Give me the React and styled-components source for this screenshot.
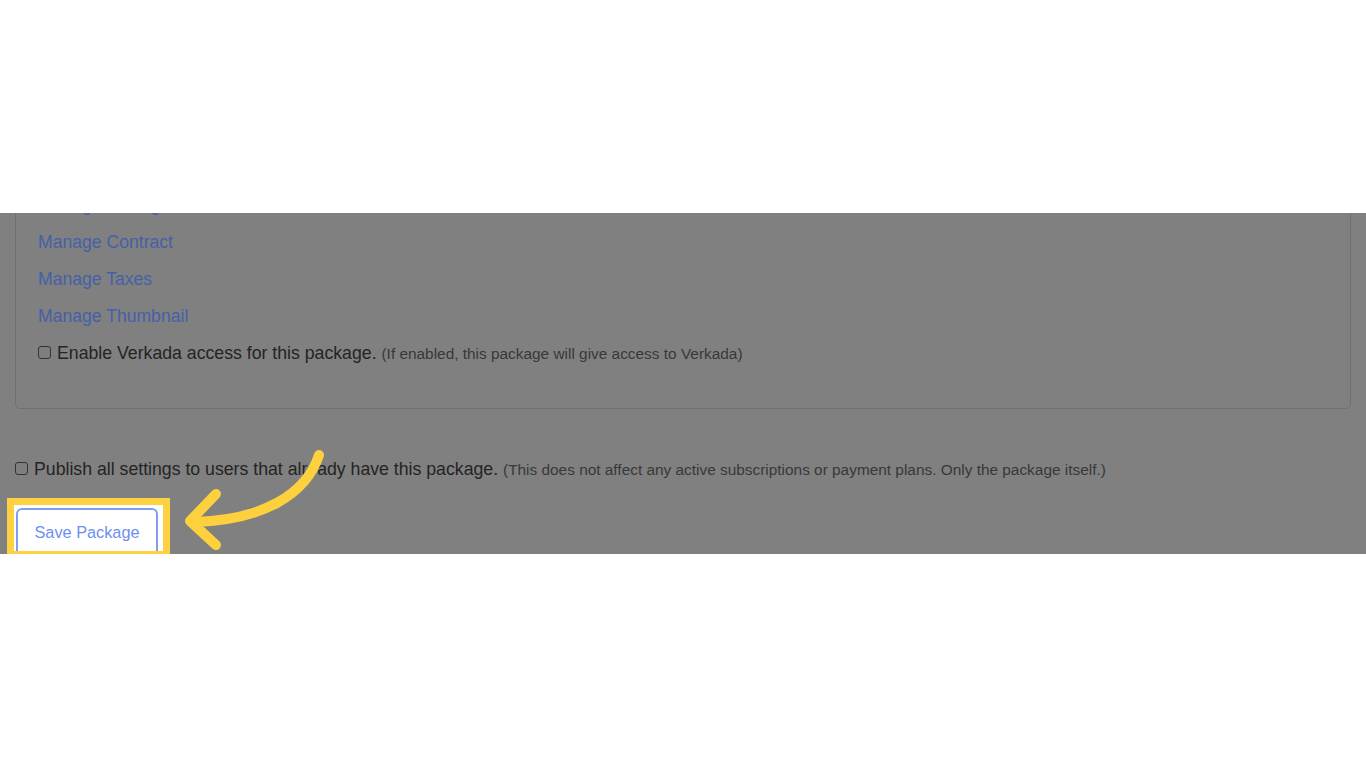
import styled, { createGlobalStyle } from 'styled-components';

const GlobalStyle = createGlobalStyle`
  body {
    margin: 0;
    background: #ffffff;
    font-family: "Liberation Sans", Arial, sans-serif;
  }
`;

export default function App() {
  return (
    <>
      <GlobalStyle />
      <TopBlank />
      <Shot>
        <PanelClip>
          <Panel>
            <ManageLink href="#">Manage Pricing</ManageLink>
            <ManageLink href="#">Manage Contract</ManageLink>
            <ManageLink href="#">Manage Taxes</ManageLink>
            <ManageLink href="#">Manage Thumbnail</ManageLink>
            <CheckRow $tall>
              <Box type="checkbox" />
              <span>
                Enable Verkada access for this package.{' '}
                <Note>(If enabled, this package will give access to Verkada)</Note>
              </span>
            </CheckRow>
          </Panel>
        </PanelClip>

        <PublishRow>
          <Box type="checkbox" />
          <span>
            Publish all settings to users that already have this package.{' '}
            <Note>
              (This does not affect any active subscriptions or payment plans. Only the package itself.)
            </Note>
          </span>
        </PublishRow>

        <Highlight>
          <SaveButton>Save Package</SaveButton>
        </Highlight>

        <Arrow viewBox="0 0 1366 341" aria-hidden="true">
          <path d="M319 242 C 306 282, 262 307, 195 309" />
          <path d="M216 281 L 190 308 L 216 332" />
        </Arrow>
      </Shot>
    </>
  );
}

const TopBlank = styled.div`
  height: 213px;
`;

const Shot = styled.section`
  position: relative;
  height: 341px;
  background: #808080;
`;

const PanelClip = styled.div`
  overflow: hidden;
  margin: 0 15px;
`;

const Panel = styled.div`
  margin-top: -27px;
  border: 1px solid #707070;
  border-radius: 5px;
  padding: 0 22px 36px 22px;
  display: flex;
  flex-direction: column;
  align-items: flex-start;
`;

const ManageLink = styled.a`
  font-size: 17.6px;
  line-height: 37px;
  color: #4560a8;
  text-decoration: none;
`;

const CheckRow = styled.label`
  display: flex;
  align-items: center;
  font-size: 17.7px;
  line-height: ${(p) => (p.$tall ? '37px' : '24px')};
  color: #242424;
`;

const PublishRow = styled(CheckRow)`
  margin: 48px 0 0 15px;
`;

const Note = styled.span`
  font-size: 15.4px;
  color: #383838;
`;

const Box = styled.input`
  appearance: none;
  width: 13px;
  height: 13px;
  margin: -3px 6px 0 0;
  border: 1px solid #333333;
  border-radius: 3px;
  background: #7e7e7e;
  flex-shrink: 0;
`;

const Highlight = styled.div`
  position: relative;
  z-index: 1;
  box-sizing: border-box;
  width: 163px;
  height: 60px;
  margin: 16px 0 0 7px;
  padding: 3px 0 0 2px;
  border: 7px solid #fdd13f;
  background: #ffffff;
  overflow: hidden;
`;

const SaveButton = styled.button`
  box-sizing: border-box;
  width: 142px;
  height: 48px;
  padding: 0;
  border: 2px solid #7d9cf2;
  border-radius: 6px;
  background: #ffffff;
  color: #6c8ff0;
  font-family: "Liberation Sans", Arial, sans-serif;
  font-size: 16.3px;
  cursor: pointer;
`;

const Arrow = styled.svg`
  position: absolute;
  left: 0;
  top: 0;
  width: 1366px;
  height: 341px;
  overflow: visible;
  pointer-events: none;

  path {
    fill: none;
    stroke: #fdd03d;
    stroke-width: 10;
    stroke-linecap: round;
    stroke-linejoin: round;
  }
`;
